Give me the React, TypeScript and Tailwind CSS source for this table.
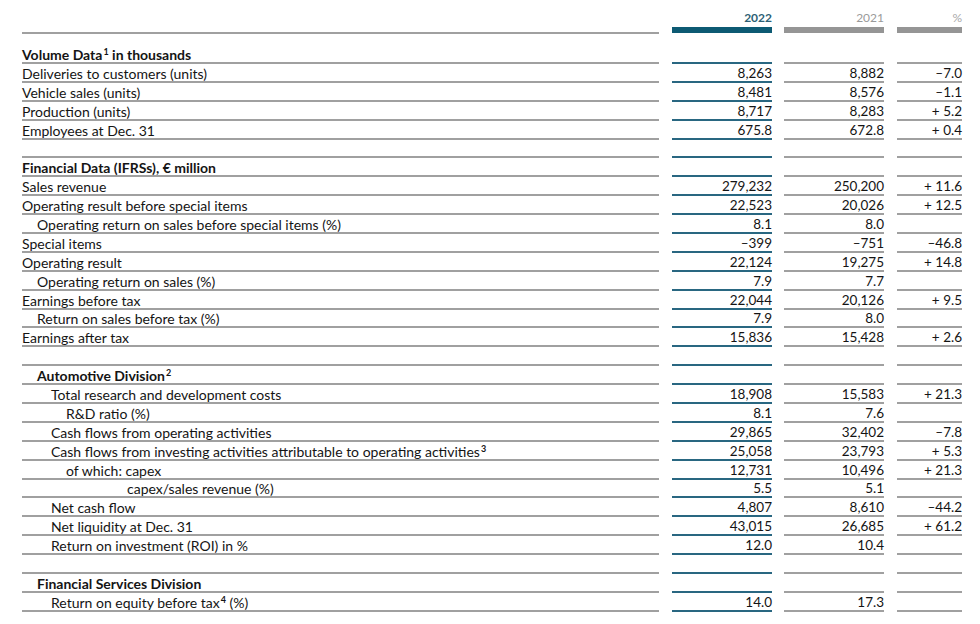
import React from 'react';

// Key figures table — label column plus 2022 / 2021 / % change columns,
// every row underlined; the 2022 column carries teal rules.

type Row = {
  label?: React.ReactNode;
  indent?: number;
  bold?: boolean;
  v22?: string;
  v21?: string;
  pct?: string;
  tall?: boolean;
};

const Sup = ({ children }: { children: React.ReactNode }) => (
  <span className="ml-[1px] align-[5px] text-[9px] font-bold leading-none">{children}</span>
);

const INDENT = ['pl-0', 'pl-[15px]', 'pl-[29px]', 'pl-[44px]', 'pl-[105px]'];

const ROWS: Row[] = [
  {
    label: (
      <>
        Volume Data<Sup>1</Sup> in thousands
      </>
    ),
    bold: true,
    tall: true,
  },
  { label: 'Deliveries to customers (units)', v22: '8,263', v21: '8,882', pct: '–7.0' },
  { label: 'Vehicle sales (units)', v22: '8,481', v21: '8,576', pct: '–1.1' },
  { label: 'Production (units)', v22: '8,717', v21: '8,283', pct: '+ 5.2' },
  { label: 'Employees at Dec. 31', v22: '675.8', v21: '672.8', pct: '+ 0.4' },
  {},
  { label: 'Financial Data (IFRSs), € million', bold: true },
  { label: 'Sales revenue', v22: '279,232', v21: '250,200', pct: '+ 11.6' },
  { label: 'Operating result before special items', v22: '22,523', v21: '20,026', pct: '+ 12.5' },
  { label: 'Operating return on sales before special items (%)', indent: 1, v22: '8.1', v21: '8.0' },
  { label: 'Special items', v22: '–399', v21: '–751', pct: '–46.8' },
  { label: 'Operating result', v22: '22,124', v21: '19,275', pct: '+ 14.8' },
  { label: 'Operating return on sales (%)', indent: 1, v22: '7.9', v21: '7.7' },
  { label: 'Earnings before tax', v22: '22,044', v21: '20,126', pct: '+ 9.5' },
  { label: 'Return on sales before tax (%)', indent: 1, v22: '7.9', v21: '8.0' },
  { label: 'Earnings after tax', v22: '15,836', v21: '15,428', pct: '+ 2.6' },
  {},
  {
    label: (
      <>
        Automotive Division<Sup>2</Sup>
      </>
    ),
    indent: 1,
    bold: true,
  },
  { label: 'Total research and development costs', indent: 2, v22: '18,908', v21: '15,583', pct: '+ 21.3' },
  { label: 'R&D ratio (%)', indent: 3, v22: '8.1', v21: '7.6' },
  { label: 'Cash flows from operating activities', indent: 2, v22: '29,865', v21: '32,402', pct: '–7.8' },
  {
    label: (
      <>
        Cash flows from investing activities attributable to operating activities<Sup>3</Sup>
      </>
    ),
    indent: 2,
    v22: '25,058',
    v21: '23,793',
    pct: '+ 5.3',
  },
  { label: 'of which: capex', indent: 3, v22: '12,731', v21: '10,496', pct: '+ 21.3' },
  { label: 'capex/sales revenue (%)', indent: 4, v22: '5.5', v21: '5.1' },
  { label: 'Net cash flow', indent: 2, v22: '4,807', v21: '8,610', pct: '–44.2' },
  { label: 'Net liquidity at Dec. 31', indent: 2, v22: '43,015', v21: '26,685', pct: '+ 61.2' },
  { label: 'Return on investment (ROI) in %', indent: 2, v22: '12.0', v21: '10.4' },
  {},
  { label: 'Financial Services Division', indent: 1, bold: true },
  {
    label: (
      <>
        Return on equity before tax<Sup>4</Sup> (%)
      </>
    ),
    indent: 2,
    v22: '14.0',
    v21: '17.3',
  },
];

const TableRow = ({ row }: { row: Row }) => {
  const h = row.tall ? 'h-[30px]' : 'h-[18.9px]';
  return (
    <div className={`flex ${h}`}>
      <div
        className={`flex w-[637px] items-end border-b-2 border-[#a0a0a0] text-[14px] ${INDENT[row.indent ?? 0]} ${
          row.bold ? 'font-bold' : ''
        }`}
      >
        <span className="whitespace-nowrap">{row.label}</span>
      </div>
      <div className="ml-[13px] flex w-[100px] items-end justify-end border-b-2 border-[#296781]">
        {row.v22}
      </div>
      <div className="ml-[12px] flex w-[100px] items-end justify-end border-b-2 border-[#a0a0a0]">
        {row.v21}
      </div>
      <div className="ml-[13px] flex w-[65px] items-end justify-end border-b-2 border-[#a0a0a0]">
        {row.pct}
      </div>
    </div>
  );
};

export default function App() {
  return (
    <div className="h-[624px] w-[980px] bg-white pl-[22px] font-['Lato',sans-serif] text-[13.5px] leading-[15px] text-[#141414]">
      {/* Column header: years over coloured bars */}
      <div className="flex items-start">
        <div className="h-[34px] w-[637px] border-b-2 border-[#a0a0a0]" />
        <div className="ml-[13px] flex h-[33px] w-[100px] flex-col justify-end">
          <div className="text-right text-[12px] font-bold leading-[14px] text-[#2d5f75]">2022</div>
          <div className="mt-[2px] h-[6px] bg-[#0d5a73]" />
        </div>
        <div className="ml-[12px] flex h-[33px] w-[100px] flex-col justify-end">
          <div className="text-right text-[12px] leading-[14px] text-[#9a9a9a]">2021</div>
          <div className="mt-[2px] h-[6px] bg-[#959595]" />
        </div>
        <div className="ml-[13px] flex h-[33px] w-[65px] flex-col justify-end">
          <div className="text-right text-[12px] leading-[14px] text-[#a8a8a8]">%</div>
          <div className="mt-[2px] h-[6px] bg-[#959595]" />
        </div>
      </div>
      {ROWS.map((row, i) => (
        <TableRow key={i} row={row} />
      ))}
    </div>
  );
}
